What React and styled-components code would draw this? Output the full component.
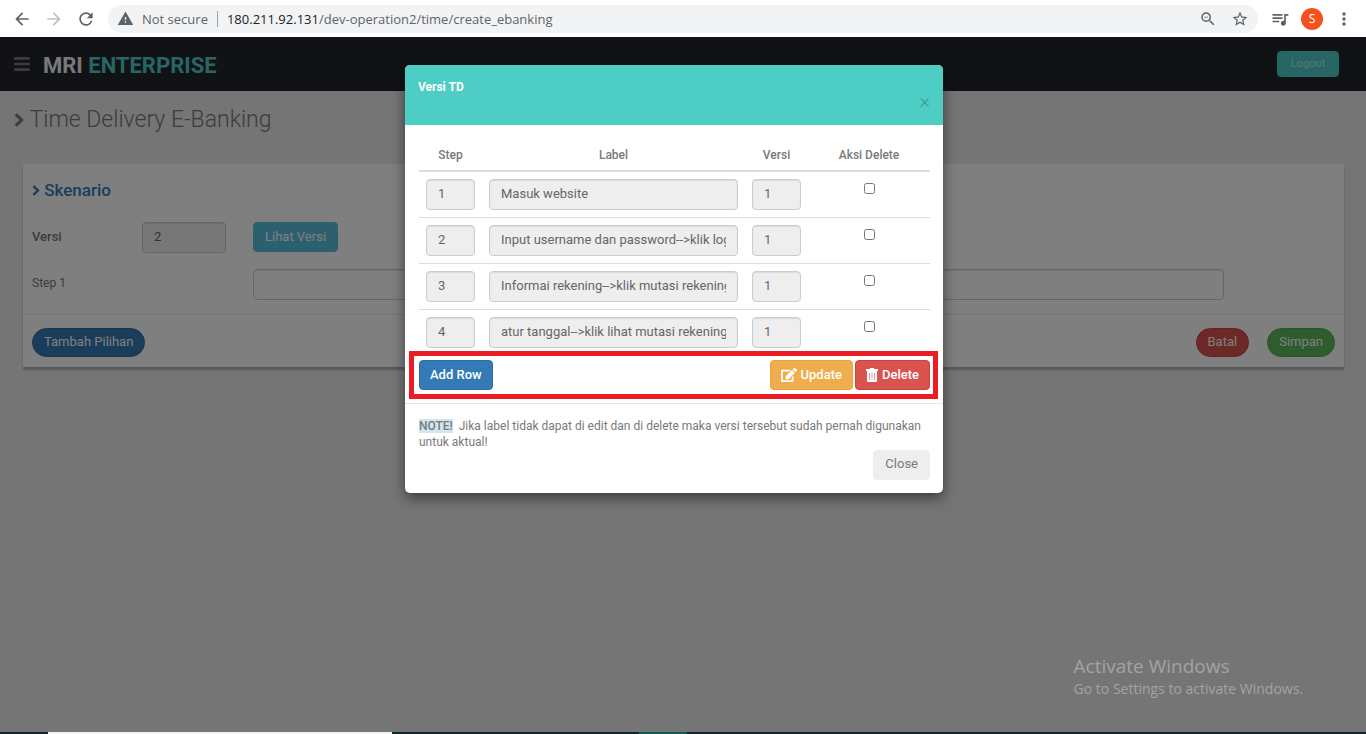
import React from "react";
import styled, { createGlobalStyle, css } from "styled-components";
import {
  MdArrowBack,
  MdArrowForward,
  MdRefresh,
  MdWarning,
  MdZoomOut,
  MdStarBorder,
  MdQueueMusic,
  MdMoreVert,
} from "react-icons/md";
import { FaBars, FaEdit } from "react-icons/fa";

const GlobalStyle = createGlobalStyle`
  *, *::before, *::after { box-sizing: border-box; }
  body { margin: 0; font-family: Roboto, sans-serif; font-size: 12px; color: #797979; }
  button, input { font-family: inherit; }
`;

const Screen = styled.div`
  display: flex;
  flex-direction: column;
  min-height: 100vh;
`;

/* Browser toolbar */
const BrowserBar = styled.div`
  display: flex;
  align-items: center;
  height: 37px;
  padding: 0 6px 0 12px;
  background: #fff;
  font-family: "Open Sans", sans-serif;
  font-size: 13px;
`;

const IconButton = styled.button`
  display: flex;
  align-items: center;
  justify-content: center;
  width: 32px;
  height: 28px;
  padding: 0;
  border: 0;
  background: none;
  color: ${(p) => (p.$faded ? "#bdc1c6" : "#5f6368")};
  font-size: ${(p) => (p.$small ? 18 : 20)}px;
`;

const NavButtons = styled.nav`
  display: flex;
  margin-left: -6px;
`;

const AddressBar = styled.div`
  display: flex;
  flex: 1;
  align-items: center;
  height: 28px;
  margin: 0 6px;
  padding: 0 2px 0 9px;
  border-radius: 14px;
  background: #f1f3f4;
  color: #5f6368;
`;

const Security = styled.span`
  padding: 0 9px 0 8px;
  border-right: 1px solid #9aa0a6;
  line-height: 16px;
`;

const Url = styled.span`
  flex: 1;
  padding-left: 9px;
  b { color: #202124; font-weight: 400; }
`;

const Avatar = styled.button`
  width: 22px;
  height: 22px;
  margin: 0 5px;
  padding: 0;
  border: 0;
  border-radius: 50%;
  background: #f4511e;
  color: #fff;
  font-size: 12px;
`;

/* Web page */
const Page = styled.div`
  position: relative;
  flex: 1;
  background: #eaeaea;
`;

const SiteHeader = styled.header`
  display: flex;
  align-items: center;
  height: 54px;
  padding: 0 27px 0 13px;
  background: #22242a;
`;

const MenuButton = styled.button`
  display: flex;
  padding: 0;
  border: 0;
  background: none;
  color: #797979;
  font-size: 18px;
`;

const Logo = styled.a`
  flex: 1;
  margin-left: 12px;
  padding-top: 2px;
  color: #f2f2f2;
  font-size: 22px;
  font-weight: 700;
  text-decoration: none;
  span { color: #4ecdc4; }
`;

const tones = {
  teal: ["#4ecdc4", "#4ecdc4", "#b0f0e8"],
  info: ["#5bc0de", "#5bc0de", "#fff"],
  primary: ["#337ab7", "#2e6da4", "#fff"],
  warning: ["#f0ad4e", "#eea236", "#fff"],
  danger: ["#d9534f", "#d43f3a", "#fff"],
  success: ["#5cb85c", "#4cae4c", "#fff"],
  plain: ["#eeeeee", "#eeeeee", "#797979"],
};

const Button = styled.button`
  display: inline-flex;
  align-items: center;
  justify-content: center;
  height: 30px;
  padding: 0 11px 2px;
  border: 1px solid ${(p) => tones[p.$tone][1]};
  border-radius: 4px;
  background: ${(p) => tones[p.$tone][0]};
  color: ${(p) => tones[p.$tone][2]};
  font-size: 13px;
  ${(p) => p.$strong && css`padding: 0 10px; font-weight: 500;`}
  ${(p) => p.$round && css`height: 29px; border-radius: 15px;`}
  svg { margin-right: 4px; font-size: 16px; }
`;

const LogoutButton = styled(Button)`
  height: 26px;
  padding: 0 13px 2px;
  font-size: 11px;
`;

const PageTitle = styled.h1`
  display: flex;
  align-items: center;
  gap: 5px;
  margin: 16px 14px 31px;
  font-size: 23px;
  font-weight: 300;
  line-height: 26px;
`;

const Card = styled.section`
  margin: 0 22px 0 23px;
  background: #fff;
  box-shadow: 0 3px 2px #aab2bd;
`;

const CardBody = styled.form`
  display: flex;
  flex-direction: column;
  padding: 15px 9px 14px;
`;

const CardTitle = styled.h2`
  display: flex;
  align-items: center;
  gap: 4px;
  margin: 0 0 21px;
  color: #337ab7;
  font-size: 17px;
  font-weight: 500;
  line-height: 22px;
`;

const FieldRow = styled.div`
  display: flex;
  align-items: flex-start;
  height: 31px;
  & + & { margin-top: 16px; }
`;

const FieldLabel = styled.label`
  width: ${(p) => (p.$wide ? 221 : 110)}px;
  font-weight: ${(p) => (p.$wide ? 400 : 500)};
  font-size: ${(p) => (p.$wide ? 12 : 13)}px;
  line-height: 29px;
`;

const TextInput = styled.input`
  width: 100%;
  min-width: 0;
  height: 31px;
  padding: 0 11px 2px;
  border: 1px solid #ccc;
  border-radius: 4px;
  background: ${(p) => (p.readOnly ? "#eee" : "#fff")};
  box-shadow: inset 0 1px 1px rgba(0, 0, 0, 0.08);
  color: #666;
  font-size: 13px;
`;

const VersionInput = styled(TextInput)`
  width: 84px;
  margin-right: 27px;
`;

const StepInput = styled(TextInput)`
  flex: 1;
  margin-right: 111px;
`;

const CardFooter = styled.footer`
  display: flex;
  gap: 18px;
  padding: 13px 9px 10px;
  border-top: 1px solid #eaeaea;
  ${Button}:first-child { margin-right: auto; }
`;

/* Dialog */
const Backdrop = styled.div`
  position: absolute;
  inset: 0;
  padding: 28px 18px 28px 0;
  background: rgba(0, 0, 0, 0.5);
`;

const Dialog = styled.div`
  max-width: 538px;
  margin: 0 auto;
  overflow: hidden;
  border-radius: 5px;
  background: #fff;
  box-shadow: 0 5px 14px rgba(0, 0, 0, 0.5);
`;

const DialogHeader = styled.div`
  display: flex;
  flex-direction: column;
  height: 60px;
  padding: 14px 13px 11px;
  background: #4ecdc4;
`;

const DialogTitle = styled.h3`
  margin: 0;
  color: #fff;
  font-size: 12px;
  font-weight: 700;
  line-height: 16px;
`;

const DismissButton = styled.button`
  align-self: flex-end;
  padding: 0;
  border: 0;
  background: none;
  color: #3a9a93;
  font-size: 20px;
  font-weight: 300;
  line-height: 13px;
`;

const DialogBody = styled.div`
  padding: 14px 13px 13px 14px;
`;

const StepTable = styled.table`
  width: 100%;
  margin-bottom: 4px;
  border-collapse: collapse;
  table-layout: fixed;
  th {
    height: 32px;
    padding: 0;
    border-bottom: 2px solid #ddd;
    font-weight: 500;
  }
  td {
    height: 46px;
    padding: 7px;
    border-top: 1px solid #ddd;
    vertical-align: top;
  }
`;

const Column = styled.col`
  width: ${(p) => p.$width}px;
`;

const TickCell = styled.td`
  text-align: center;
`;

const Tick = styled.input`
  width: 11px;
  height: 11px;
  margin: 4px 0 0;
`;

const Actions = styled.div`
  position: relative;
  display: flex;
  gap: 2px;
  ${Button}:first-child { margin-right: auto; }
`;

const Highlight = styled.div`
  position: absolute;
  inset: -9px -8px -9px -10px;
  border: 5px solid #ed1c24;
  pointer-events: none;
`;

const DialogFooter = styled.div`
  display: flex;
  flex-direction: column;
  padding: 14px 13px 13px 14px;
  border-top: 1px solid #e5e5e5;
  ${Button} { align-self: flex-end; }
`;

const Note = styled.p`
  margin: 0;
  font-size: 12px;
  line-height: 16px;
  strong { background: #d0e6f1; font-weight: 500; }
`;

/* Windows desktop */
const Watermark = styled.div`
  position: absolute;
  right: 63px;
  bottom: 33px;
  color: #a3a3a3;
  font-family: "Open Sans", sans-serif;
  font-size: 14px;
  line-height: 20px;
`;

const WatermarkTitle = styled.div`
  font-size: 19px;
  line-height: 26px;
`;

const Taskbar = styled.div`
  display: flex;
  height: 2px;
  padding-left: 48px;
  background: #14252a;
`;

const TaskbarItem = styled.div`
  width: ${(p) => (p.$search ? 344 : 48)}px;
  margin-right: 247px;
  background: ${(p) => (p.$search ? "#f3f3f3" : "#0f5c50")};
`;

function Chevron({ size }) {
  return (
    <svg width={size * 0.75} height={size} viewBox="0 0 9 12" fill="none" aria-hidden="true">
      <path d="M1.500 1.200L6.500 6L1.500 10.800" stroke="currentColor" strokeWidth="2.600" />
    </svg>
  );
}

function TrashIcon() {
  return (
    <svg width="12" height="14" viewBox="0 0 12 14" fill="currentColor" aria-hidden="true">
      <path d="M4 0h4v1h4v2H0V1h4V0z" />
      <path
        fillRule="evenodd"
        d="M1 3h10v10a1 1 0 0 1-1 1H2a1 1 0 0 1-1-1V3zm2.200 2v7h.6V5h-.6zm2.500 0v7h.6V5h-.6zm2.500 0v7h.6V5h-.6z"
      />
    </svg>
  );
}

const steps = [
  "Masuk website",
  "Input username dan password-->klik login",
  "Informai rekening-->klik mutasi rekening",
  "atur tanggal-->klik lihat mutasi rekening",
];

export default function App() {
  return (
    <Screen>
      <GlobalStyle />
      <BrowserBar>
        <NavButtons>
          <IconButton aria-label="Back"><MdArrowBack /></IconButton>
          <IconButton aria-label="Forward" $faded><MdArrowForward /></IconButton>
          <IconButton aria-label="Reload"><MdRefresh /></IconButton>
        </NavButtons>
        <AddressBar>
          <MdWarning size={17} />
          <Security>Not secure</Security>
          <Url><b>180.211.92.131</b>/dev-operation2/time/create_ebanking</Url>
          <IconButton aria-label="Zoom" $small><MdZoomOut /></IconButton>
          <IconButton aria-label="Bookmark" $small><MdStarBorder /></IconButton>
        </AddressBar>
        <IconButton aria-label="Media"><MdQueueMusic /></IconButton>
        <Avatar aria-label="Profile">S</Avatar>
        <IconButton aria-label="More"><MdMoreVert /></IconButton>
      </BrowserBar>

      <Page>
        <SiteHeader>
          <MenuButton aria-label="Menu"><FaBars /></MenuButton>
          <Logo href="#">MRI <span>ENTERPRISE</span></Logo>
          <LogoutButton $tone="teal">Logout</LogoutButton>
        </SiteHeader>
        <PageTitle><Chevron size={14} />Time Delivery E-Banking</PageTitle>
        <Card>
          <CardBody>
            <CardTitle><Chevron size={11} />Skenario</CardTitle>
            <FieldRow>
              <FieldLabel htmlFor="version">Versi</FieldLabel>
              <VersionInput id="version" defaultValue="2" readOnly />
              <Button type="button" $tone="info">Lihat Versi</Button>
            </FieldRow>
            <FieldRow>
              <FieldLabel htmlFor="step" $wide>Step 1</FieldLabel>
              <StepInput id="step" />
            </FieldRow>
          </CardBody>
          <CardFooter>
            <Button $tone="primary" $round>Tambah Pilihan</Button>
            <Button $tone="danger" $round>Batal</Button>
            <Button $tone="success" $round>Simpan</Button>
          </CardFooter>
        </Card>

        <Backdrop>
          <Dialog role="dialog" aria-labelledby="dialog-title">
            <DialogHeader>
              <DialogTitle id="dialog-title">Versi TD</DialogTitle>
              <DismissButton aria-label="Dismiss">×</DismissButton>
            </DialogHeader>
            <DialogBody>
              <StepTable>
                <colgroup>
                  <Column $width={63} />
                  <Column $width={263} />
                  <Column $width={63} />
                  <Column $width={122} />
                </colgroup>
                <thead>
                  <tr>
                    <th>Step</th>
                    <th>Label</th>
                    <th>Versi</th>
                    <th>Aksi Delete</th>
                  </tr>
                </thead>
                <tbody>
                  {steps.map((label, i) => (
                    <tr key={label}>
                      <td><TextInput aria-label="Step" defaultValue={i + 1} readOnly /></td>
                      <td><TextInput aria-label="Label" defaultValue={label} readOnly /></td>
                      <td><TextInput aria-label="Versi" defaultValue="1" readOnly /></td>
                      <TickCell><Tick type="checkbox" aria-label="Aksi Delete" /></TickCell>
                    </tr>
                  ))}
                </tbody>
              </StepTable>
              <Actions>
                <Button $tone="primary" $strong>Add Row</Button>
                <Button $tone="warning" $strong><FaEdit />Update</Button>
                <Button $tone="danger" $strong><TrashIcon />Delete</Button>
                <Highlight />
              </Actions>
            </DialogBody>
            <DialogFooter>
              <Note>
                <strong>NOTE!</strong>
                <span>
                  &nbsp; Jika label tidak dapat di edit dan di delete maka versi tersebut sudah
                  pernah digunakan untuk aktual!
                </span>
              </Note>
              <Button $tone="plain">Close</Button>
            </DialogFooter>
          </Dialog>
        </Backdrop>
        <Watermark>
          <WatermarkTitle>Activate Windows</WatermarkTitle>
          Go to Settings to activate Windows.
        </Watermark>
      </Page>
      <Taskbar>
        <TaskbarItem $search />
        <TaskbarItem />
      </Taskbar>
    </Screen>
  );
}
